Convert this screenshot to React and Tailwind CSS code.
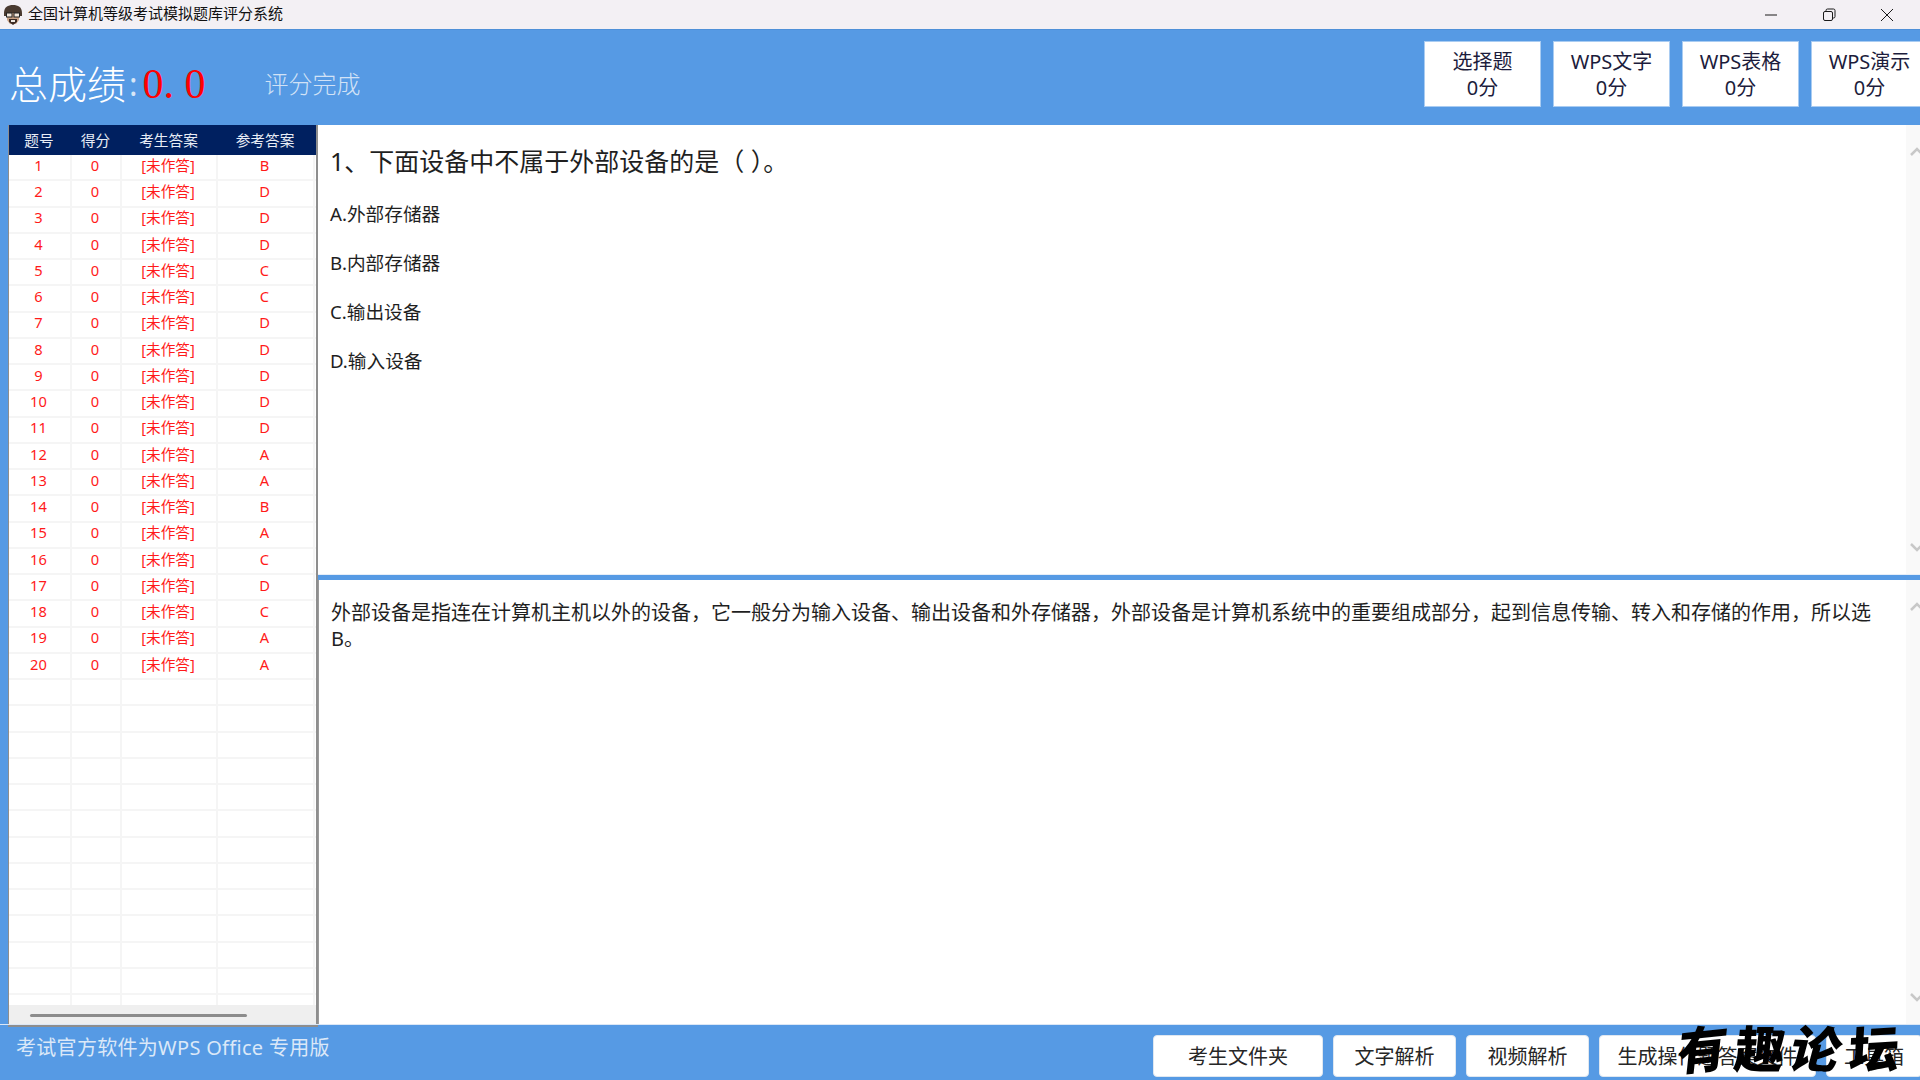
import React from 'react';

const FONT = 'font-["Noto_Sans","Noto_Sans_CJK_SC",sans-serif]';

const answers = ['B', 'D', 'D', 'D', 'C', 'C', 'D', 'D', 'D', 'D', 'D', 'A', 'A', 'B', 'A', 'C', 'D', 'C', 'A', 'A'];
const emptyRows = Array.from({ length: 13 }, (_, i) => i);
const scores = [
  ['选择题', '0分'],
  ['WPS文字', '0分'],
  ['WPS表格', '0分'],
  ['WPS演示', '0分'],
];
const options = ['A.外部存储器', 'B.内部存储器', 'C.输出设备', 'D.输入设备'];

const cols = 'grid grid-cols-[63px_50px_96px_97px_1fr]';
const cell = 'flex items-center justify-center border-r-2 border-[#f5f5f5] pb-1 pr-[2px]';

const Logo = () => (
  <svg width="22" height="22" viewBox="0 0 22 22" className="shrink-0">
    <path d="M2 9C2 3 6 1 11 1s9 2 9 8v3H2z" fill="#4a3a30" />
    <path d="M5 9h12v7l-3 4H8l-3-4z" fill="#c9a184" />
    <rect x="4.5" y="9" width="5.5" height="4" fill="#f3e7dc" stroke="#222" strokeWidth="1" />
    <rect x="12" y="9" width="5.5" height="4" fill="#f3e7dc" stroke="#222" strokeWidth="1" />
    <path d="M7 15h8v3l-4 3-4-3z" fill="#3b2b24" />
    <path d="M9 16h4v2H9z" fill="#efe9e2" />
  </svg>
);

const WindowButton = ({ children }) => (
  <div className="flex h-full w-[58px] items-center justify-center">
    <svg width="14" height="14" viewBox="0 0 14 14" fill="none" stroke="#1a1a1a" strokeWidth="1">
      {children}
    </svg>
  </div>
);

const Chevron = ({ down }) => (
  <svg width="14" height="9" viewBox="0 0 14 9" fill="none" stroke="#c8c8c8" strokeWidth="2.5" className="shrink-0">
    <path d={down ? 'M1 1l6 6 6-6' : 'M1 8l6-6 6 6'} />
  </svg>
);

const ScrollTrack = () => (
  <div className="flex w-[14px] shrink-0 flex-col items-start justify-between overflow-hidden bg-[#f9f9f9] pl-[4px] pt-[22px] pb-[22px]">
    <Chevron />
    <Chevron down />
  </div>
);

const FooterButton = ({ width, children }) => (
  <button className={`${width} h-[42px] shrink-0 rounded border border-[#dfe7f0] bg-white pt-[2px] text-xl text-[#262626]`}>
    {children}
  </button>
);

export default function App() {
  return (
    <div className={`${FONT} relative flex h-[1080px] w-[1920px] flex-col overflow-hidden bg-[#569ae4]`}>
      {/* 타이틀바 */}
      <div className="flex h-[29px] shrink-0 items-center bg-[#f3f0f4] pl-[2px] text-[15px] text-[#111]">
        <Logo />
        <span className="ml-1 flex-1 pb-[2px]">全国计算机等级考试模拟题库评分系统</span>
        <div className="flex h-full pr-[4px]">
          <WindowButton><path d="M1 7h12" /></WindowButton>
          <WindowButton>
            <rect x="1.5" y="3.5" width="9" height="9" rx="1.5" />
            <path d="M4 3V2.500A1.500 1.500 0 0 1 5.500 1h6A1.500 1.500 0 0 1 13 2.500v6A1.500 1.500 0 0 1 11.500 10H11" />
          </WindowButton>
          <WindowButton><path d="M1 1l12 12M13 1L1 13" /></WindowButton>
        </div>
      </div>

      {/* 점수 영역 */}
      <div className="flex h-[96px] shrink-0 items-start overflow-hidden border-t border-[#4e90d8]">
        <div className="flex h-full flex-1 items-center pl-[9px] pt-3">
          <span className="text-[39px] font-light leading-none text-white">总成绩</span>
          <span className="ml-[3px] text-[32px] leading-none text-[#d8e6f7]">:</span>
          <span className="ml-[5px] w-[122px] whitespace-pre font-['Liberation_Serif',serif] text-[42px] leading-none text-[#ff0000]">0. 0</span>
          <span className="text-2xl font-light text-[#d2e2f6]">评分完成</span>
        </div>
        <div className="-mr-2 mt-[11px] flex gap-3">
          {scores.map(([name, score]) => (
            <div key={name} className="flex h-[66px] w-[117px] flex-col items-center justify-center border border-[#a9ccf2] bg-white pt-[2px] text-xl leading-[26px] text-[#1c1c3c]">
              <span>{name}</span>
              <span>{score}</span>
            </div>
          ))}
        </div>
      </div>

      <div className="flex min-h-0 flex-1">
        {/* 채점 표 */}
        <div className="ml-2 flex h-[902px] w-[310px] shrink-0 flex-col border-r-2 border-b-2 border-l border-[#8e8e8e] bg-white text-[14.67px] leading-none">
          <div className={`${cols} h-[30px] shrink-0 items-center bg-[#002060] text-[#e8edf6]`}>
            <span className="pr-[3px] text-center">题号</span>
            <span className="pr-[3px] text-center">得分</span>
            <span className="pr-[3px] text-center">考生答案</span>
            <span className="pr-[3px] text-center">参考答案</span>
          </div>
          <div className="min-h-0 flex-1 overflow-hidden">
            {answers.map((answer, i) => (
              <div key={i} className={`${cols} h-[26.26px] border-b-2 border-[#f5f5f5] text-[#ff1a1a]`}>
                <span className={cell}>{i + 1}</span>
                <span className={cell}>0</span>
                <span className={cell}>[未作答]</span>
                <span className={cell}>{answer}</span>
                <span />
              </div>
            ))}
            {emptyRows.map((i) => (
              <div key={i} className={`${cols} h-[26.26px] border-b-2 border-[#f5f5f5]`}>
                <span className={cell} />
                <span className={cell} />
                <span className={cell} />
                <span className={cell} />
                <span />
              </div>
            ))}
          </div>
          <div className="flex h-[20px] shrink-0 items-center bg-[#efefef] pl-[21px]">
            <div className="h-[3px] w-[217px] rounded-full bg-[#8c8c8c]" />
          </div>
        </div>

        {/* 문제와 해설 */}
        <div className="flex min-w-0 flex-1 flex-col">
          <div className="flex h-[449px] shrink-0 bg-white">
            <div className="flex-1 pl-[12px] pt-[19px] text-[#1f1f1f]">
              <p className="h-[34px] text-[25px] leading-[34px]">1、下面设备中不属于外部设备的是（ ）。</p>
              <div className="mt-[22px] flex flex-col gap-[21px] text-[18.67px] leading-7">
                {options.map((option) => <p key={option}>{option}</p>)}
              </div>
            </div>
            <ScrollTrack />
          </div>
          <div className="h-[6px] shrink-0 border-t border-[#e6eef8] bg-[#569ae4]" />
          <div className="flex h-[444px] shrink-0 border-l border-[#9a9a9a] bg-white">
            <p className="flex-1 pl-[12px] pr-[30px] pt-[20px] text-xl leading-[26px] text-[#1f1f1f]">
              外部设备是指连在计算机主机以外的设备，它一般分为输入设备、输出设备和外存储器，外部设备是计算机系统中的重要组成部分，起到信息传输、转入和存储的作用，所以选B。
            </p>
            <ScrollTrack />
          </div>
        </div>
      </div>

      {/* 하단 바 */}
      <div className="flex h-[56px] shrink-0 items-start overflow-hidden border-t border-[#dbe7f6]">
        <span className="ml-[16px] mt-[9px] flex-1 text-xl leading-7 tracking-[0.3px] text-[#dbe8f8]">考试官方软件为WPS Office 专用版</span>
        <div className="-mr-[2px] mt-[10px] flex gap-[10px]">
          <FooterButton width="w-[170px]">考生文件夹</FooterButton>
          <FooterButton width="w-[123px]">文字解析</FooterButton>
          <FooterButton width="w-[123px]">视频解析</FooterButton>
          <FooterButton width="w-[217px]">生成操作题答案文件</FooterButton>
          <FooterButton width="w-[96px]">工具箱</FooterButton>
        </div>
      </div>

      {/* 워터마크 */}
      <div className="absolute left-[1678px] top-[1018px] flex gap-[7px] font-['Noto_Sans_CJK_SC',sans-serif] text-[50px] font-black leading-[56px] text-black">
        <span className="-rotate-6 -skew-x-12">有</span>
        <span className="-skew-x-6">趣</span>
        <span className="rotate-3 -skew-x-12">论</span>
        <span className="-rotate-3 -skew-x-6">坛</span>
      </div>
    </div>
  );
}
